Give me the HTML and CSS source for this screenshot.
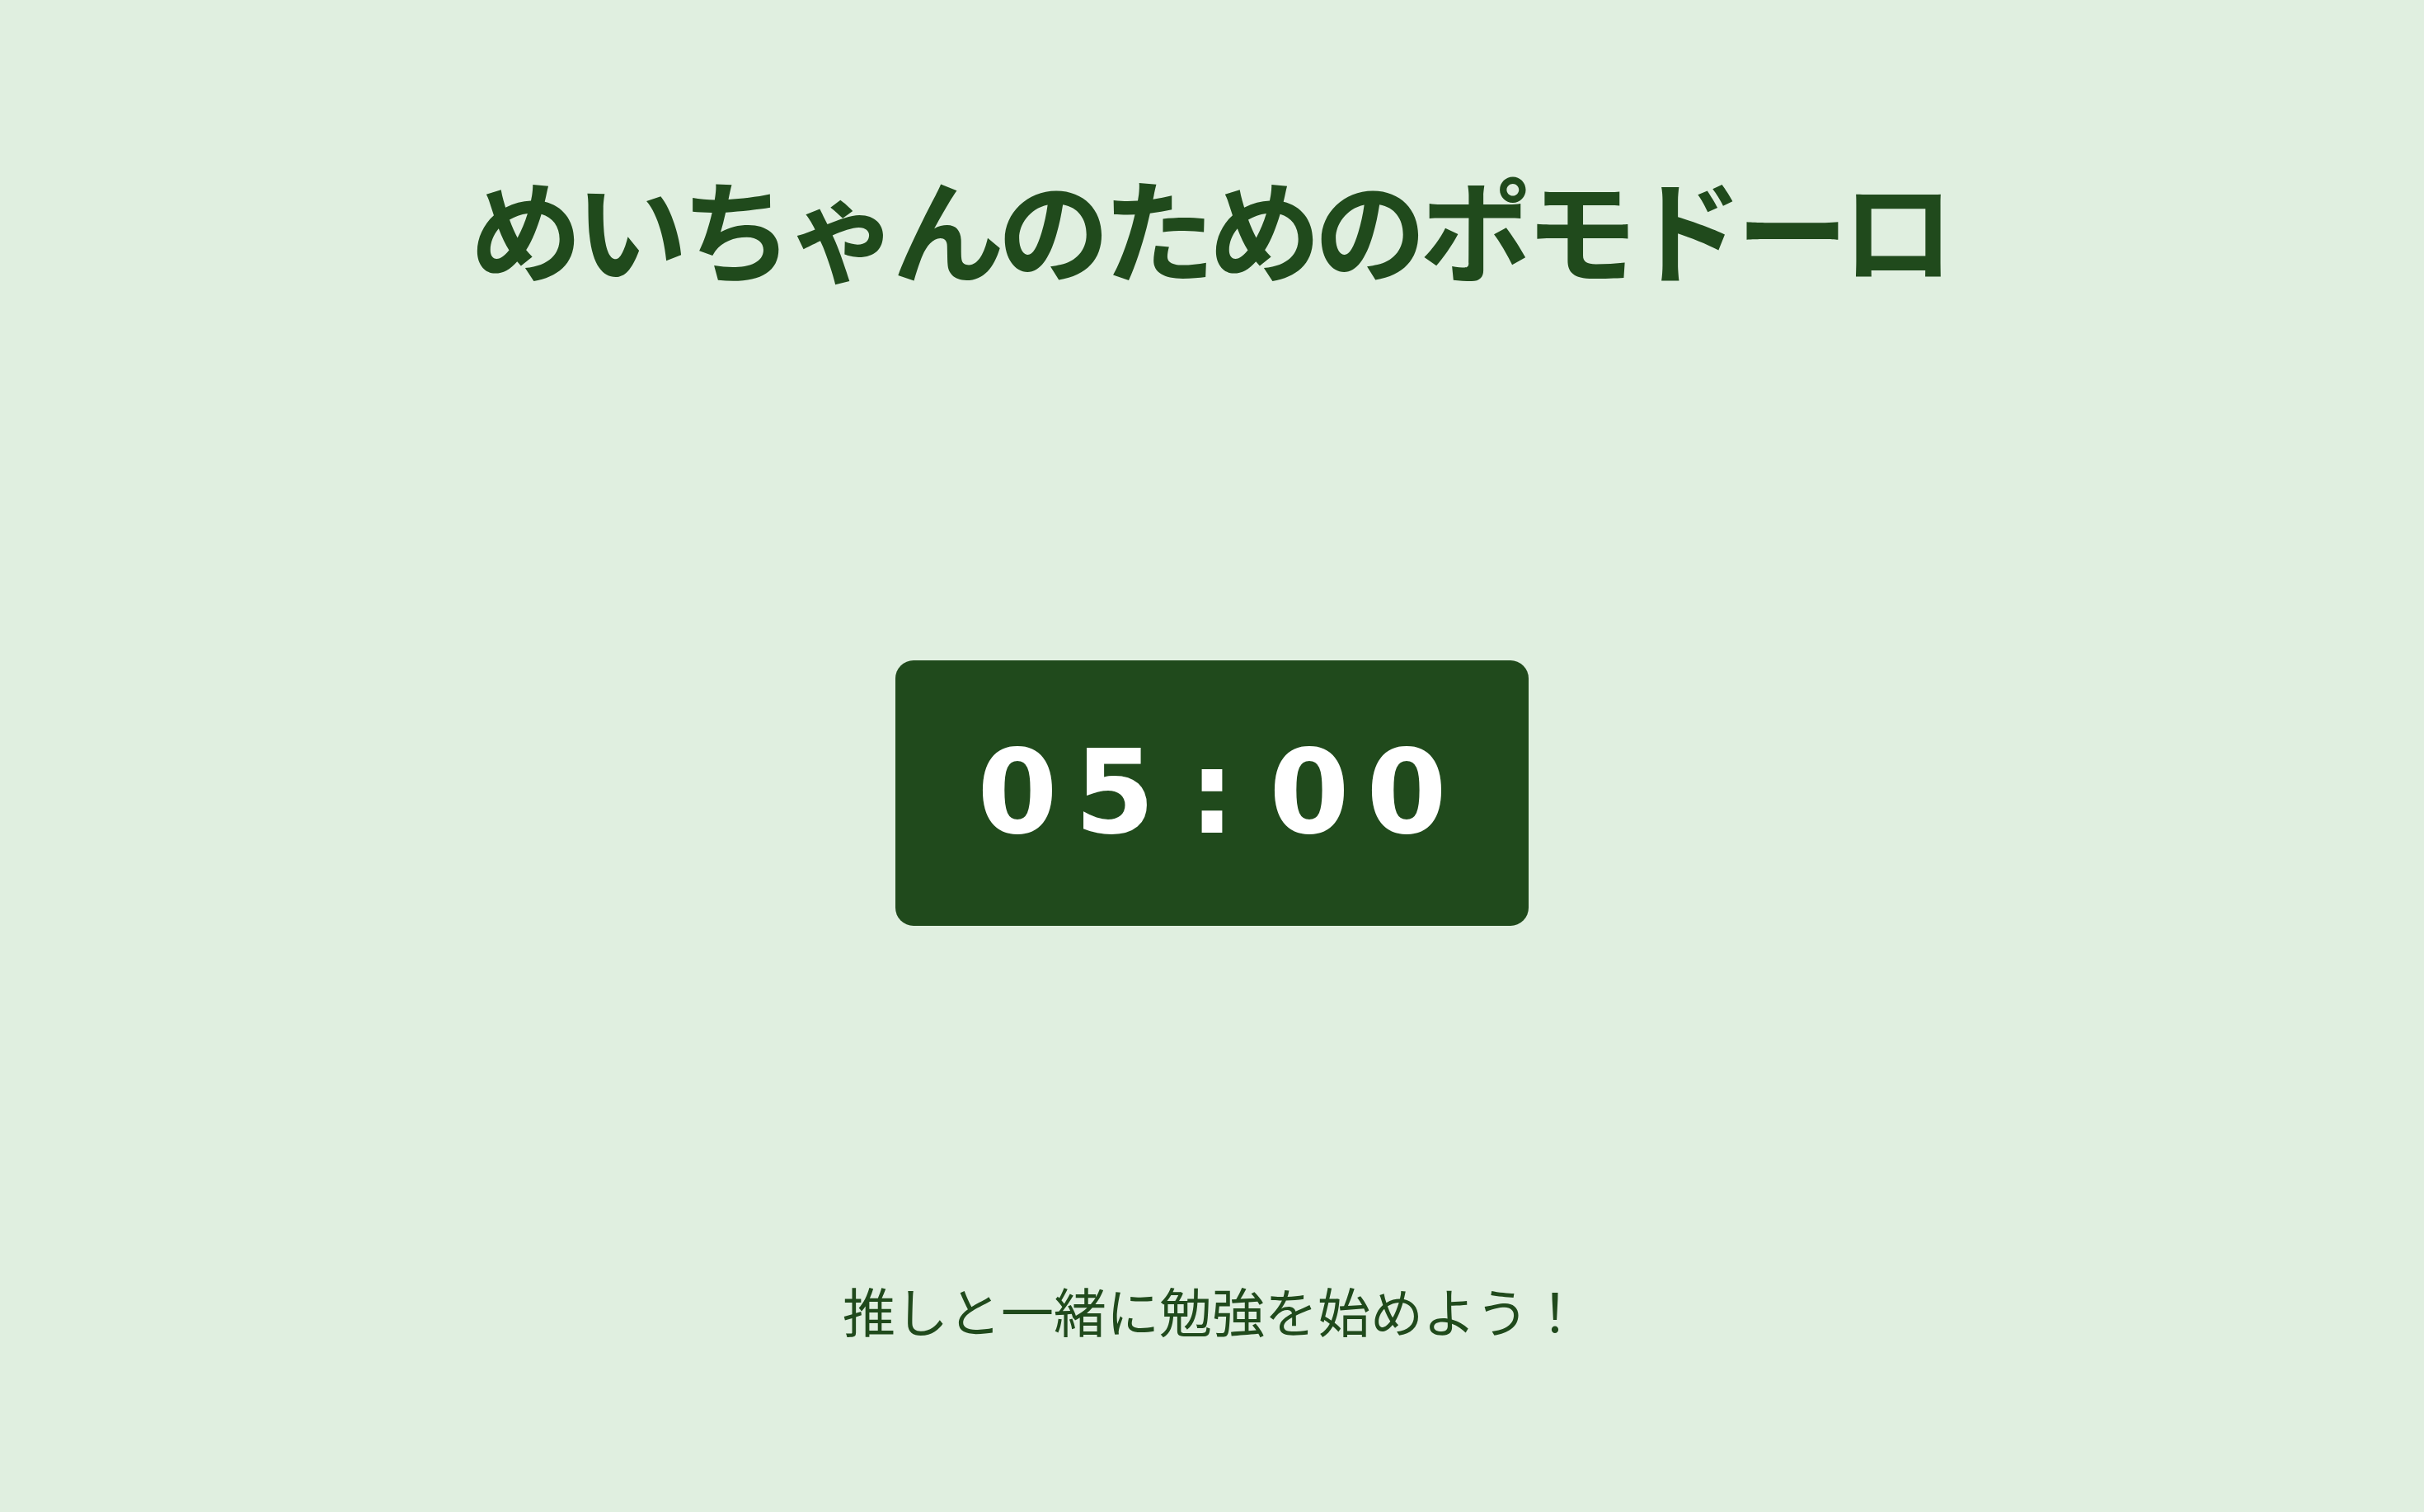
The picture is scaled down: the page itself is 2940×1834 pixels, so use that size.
FILE: index.html
```html
<!DOCTYPE html>
<html lang="ja">
<head>
<meta charset="utf-8">
<title>めいちゃんのためのポモドーロ</title>
<link rel="stylesheet" href="styles.css">
</head>
<body>
<main class="page">
  <h1 class="title">めいちゃんのためのポモドーロ</h1>
  <div class="timer">
    <div class="time">
      <span class="cell">0</span><span class="cell">5</span><span class="cell">:</span><span class="cell">0</span><span class="cell">0</span>
    </div>
  </div>
  <p class="message">推しと一緒に勉強を始めよう！</p>
</main>
</body>
</html>
```

FILE: styles.css
```css
html, body {
  margin: 0;
  padding: 0;
  background: #e0efe0;
}
body {
  font-family: "Noto Sans CJK JP", "Noto Sans", sans-serif;
  color: #204a1c;
}
.page {
  min-height: 1834px;
  box-sizing: border-box;
  display: flex;
  flex-direction: column;
  align-items: center;
  padding-top: 192px;
}
.title {
  margin: 0;
  font-size: 136px;
  line-height: 163px;
  font-weight: 700;
  letter-spacing: -8px;
  text-indent: -8px;
  color: #204a1c;
  white-space: nowrap;
}
.timer {
  margin-top: 446px;
  width: 768px;
  height: 322px;
  border-radius: 22px;
  background: #204a1c;
  display: flex;
  align-items: center;
  justify-content: center;
}
.time {
  display: flex;
  font-family: "DejaVu Sans", sans-serif;
  font-weight: 700;
  font-size: 140px;
  line-height: 1;
  color: #ffffff;
}
.cell {
  width: 118px;
  text-align: center;
}
.message {
  margin: 427px 0 0;
  font-size: 64px;
  line-height: 77px;
  font-weight: 400;
  color: #204a1c;
}
```
